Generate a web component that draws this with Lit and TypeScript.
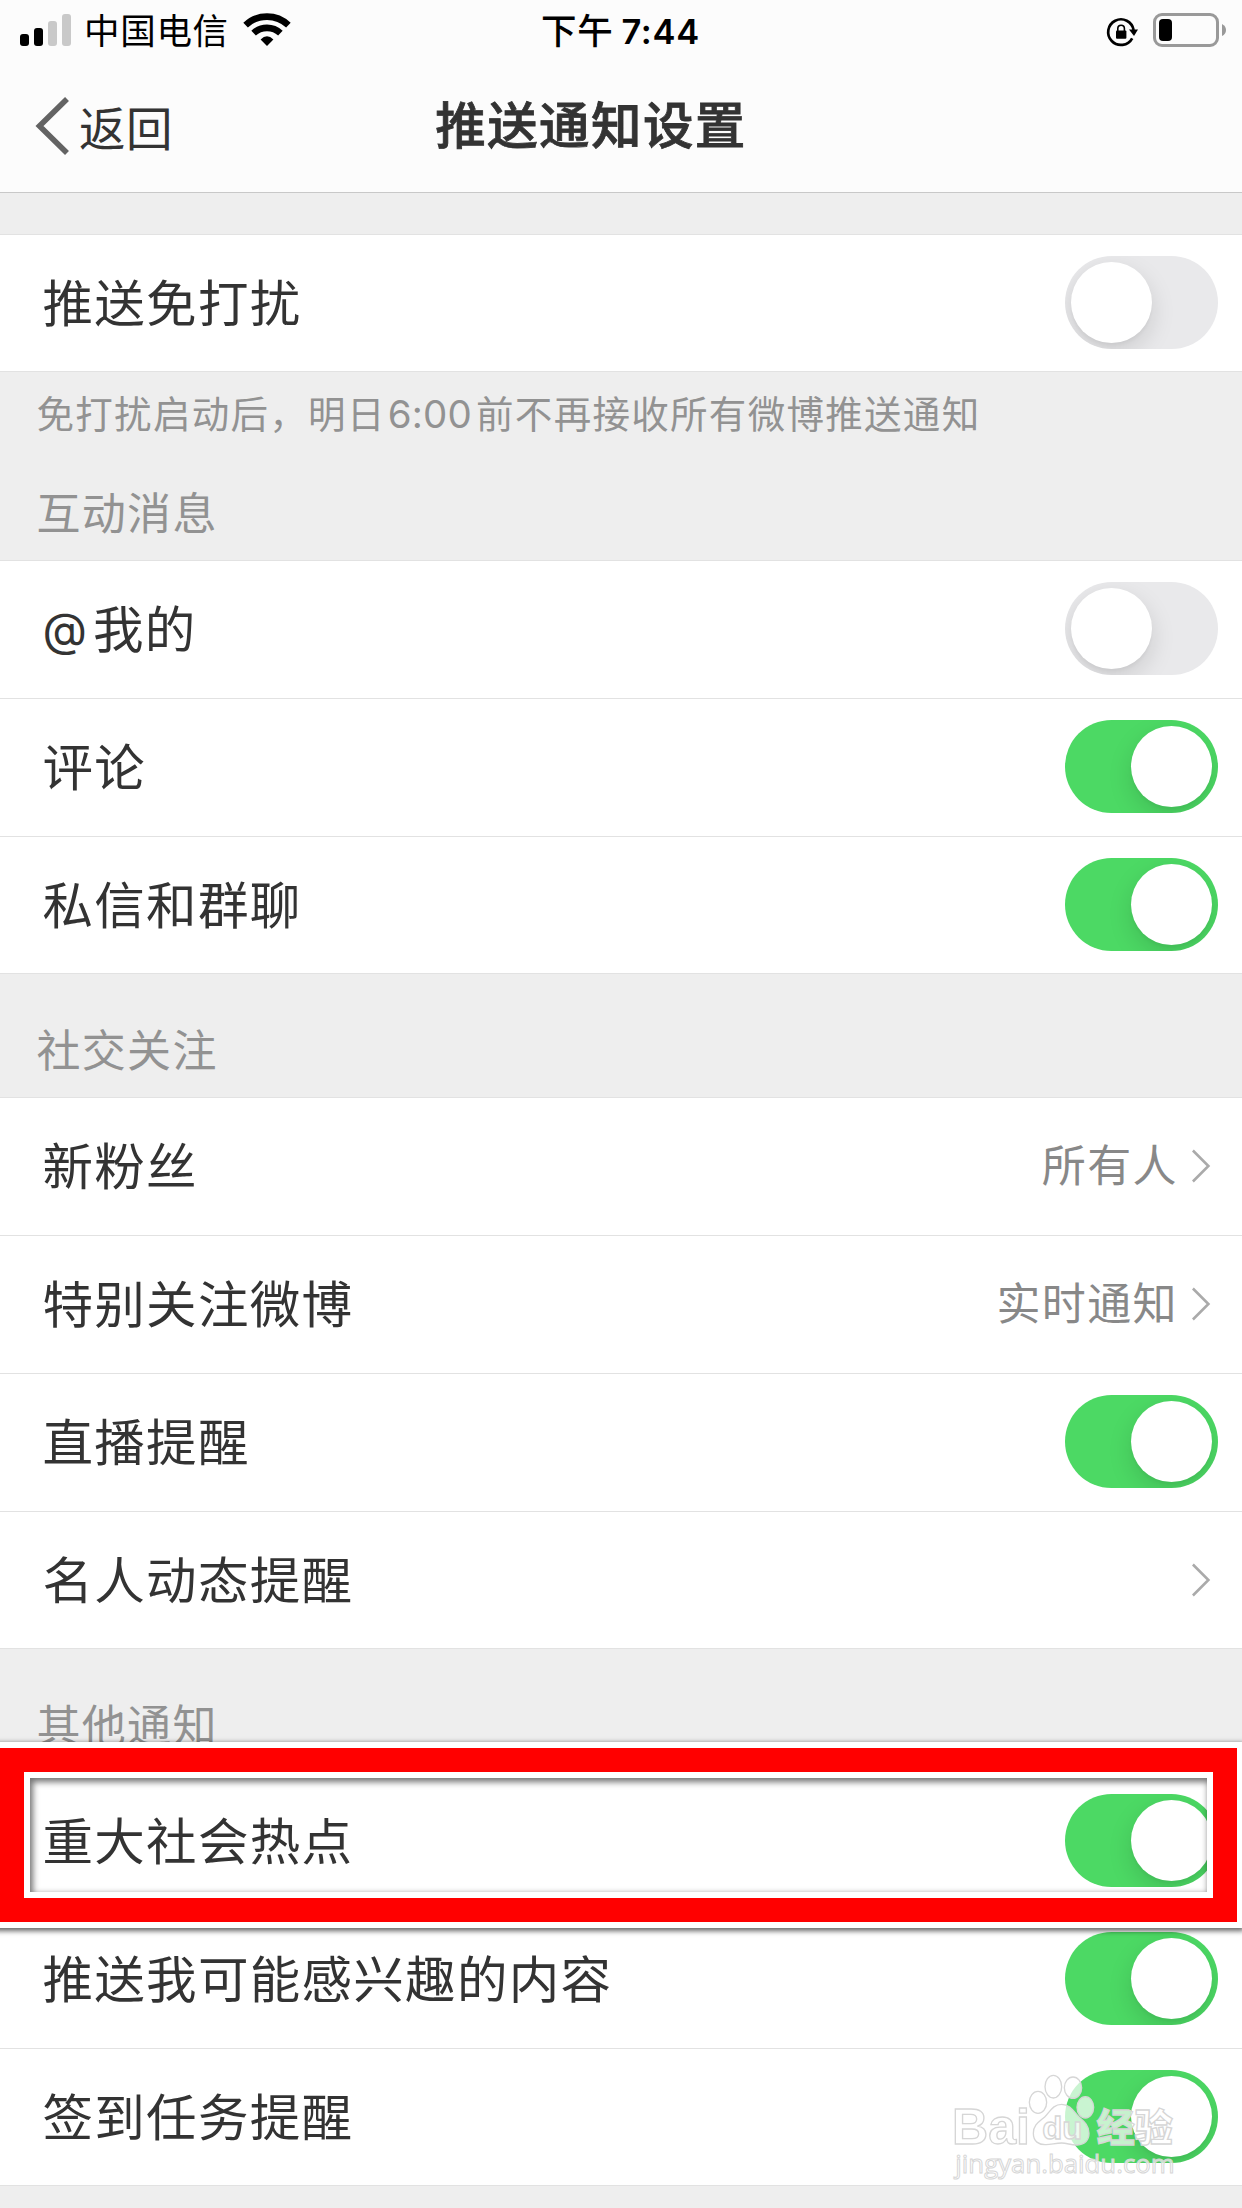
import { LitElement, html, css, svg, nothing } from "lit";
import { customElement, property } from "lit/decorators.js";
import { classMap } from "lit/directives/class-map.js";

interface Item {
  label: string;
  prefix?: string;
  on?: boolean;
  value?: string;
}

const INTERACTION: Item[] = [
  { prefix: "@", label: "我的", on: false },
  { label: "评论", on: true },
  { label: "私信和群聊", on: true },
];

const SOCIAL: Item[] = [
  { label: "新粉丝", value: "所有人" },
  { label: "特别关注微博", value: "实时通知" },
  { label: "直播提醒", on: true },
  { label: "名人动态提醒", value: "" },
];

const OTHER: Item[] = [
  { label: "重大社会热点", on: true },
  { label: "推送我可能感兴趣的内容", on: true },
  { label: "签到任务提醒", on: true },
];

@customElement("toggle-switch")
export class ToggleSwitch extends LitElement {
  @property({ type: Boolean }) on = false;

  static styles = css`
    :host {
      display: block;
      flex: none;
    }
    .track {
      box-sizing: border-box;
      width: 153px;
      height: 93px;
      padding: 6px;
      border-radius: 47px;
      background: #e9e9eb;
      overflow: hidden;
      display: flex;
      justify-content: flex-start;
    }
    .track.on {
      background: #4cd964;
      justify-content: flex-end;
    }
    .knob {
      width: 81px;
      height: 81px;
      border-radius: 50%;
      background: #fff;
      box-shadow: 0 9px 24px rgba(0, 0, 0, 0.13), 0 3px 3px rgba(0, 0, 0, 0.03);
    }
  `;

  render() {
    return html`<div class=${classMap({ track: true, on: this.on })}><div class="knob"></div></div>`;
  }
}

@customElement("setting-group")
export class SettingGroup extends LitElement {
  @property({ attribute: false }) items: Item[] = [];

  static styles = css`
    :host {
      display: block;
      background: #fff;
      border-top: 1px solid #e2e2e2;
    }
    .row {
      box-sizing: border-box;
      height: 138px;
      padding: 21px 24px 0 42.5px;
      border-bottom: 1px solid #e2e2e2;
      display: flex;
      justify-content: space-between;
      align-items: flex-start;
    }
    .row:last-child {
      height: 137px;
    }
    .label {
      font-size: 50.5px;
      letter-spacing: 1.3px;
      line-height: 88px;
      color: #333;
      white-space: nowrap;
    }
    .prefix {
      font-family: Inter, sans-serif;
      font-size: 46px;
      letter-spacing: 6px;
      line-height: 1;
      vertical-align: 2px;
    }
    .more {
      display: flex;
      align-items: center;
      gap: 14px;
      height: 93px;
      padding-right: 6px;
    }
    .value {
      margin-top: -5px;
      font-size: 44px;
      letter-spacing: 1.4px;
      line-height: 88px;
      color: #888;
    }
    .chevron {
      display: block;
      width: 20px;
      height: 34px;
    }
  `;

  private accessory(item: Item) {
    if (item.on !== undefined) {
      return html`<toggle-switch ?on=${item.on}></toggle-switch>`;
    }
    return html`<div class="more">
      ${item.value ? html`<span class="value">${item.value}</span>` : nothing}
      <svg class="chevron" viewBox="0 0 20 34">
        <path d="M0.9 1.5 L16.4 17 L0.9 32.5" fill="none" stroke="#aaa" stroke-width="2.6" />
      </svg>
    </div>`;
  }

  render() {
    return this.items.map(
      (item) =>
        html`<div class="row">
          <span class="label">${item.prefix ? html`<span class="prefix">${item.prefix}</span>` : nothing}${item.label}</span>
          ${this.accessory(item)}
        </div>`
    );
  }
}

@customElement("app-root")
export class AppRoot extends LitElement {
  static styles = css`
    :host {
      display: block;
      position: relative;
      width: 1242px;
      height: 2208px;
      overflow: hidden;
      background: #eeeeee;
      font-family: "Noto Sans CJK SC", sans-serif;
    }
    .top {
      box-sizing: border-box;
      height: 193px;
      background: #fcfcfc;
      border-bottom: 1px solid #c8c8c8;
    }
    .status {
      height: 62px;
      display: grid;
      grid-template-columns: 1fr auto 1fr;
      align-items: start;
      color: #000;
      font-size: 35.5px;
      line-height: 58px;
      letter-spacing: 0.7px;
    }
    .left {
      display: flex;
      align-items: flex-start;
      padding-left: 20px;
    }
    .bars {
      width: 52px;
      height: 62px;
      margin-right: 12px;
    }
    .wifi {
      width: 48px;
      height: 62px;
      margin-left: 14px;
    }
    .clock {
      margin-left: -1px;
      font-weight: 500;
      white-space: nowrap;
    }
    .digits {
      font-family: Inter, "Liberation Sans", sans-serif;
    }
    .clock .digits {
      margin-left: 8px;
      font-weight: 600;
      font-size: 34.5px;
    }
    .right {
      display: flex;
      justify-content: flex-end;
      align-items: flex-start;
    }
    .power {
      width: 142px;
      height: 62px;
    }
    .nav {
      height: 130px;
      display: grid;
      grid-template-columns: 1fr auto 1fr;
    }
    .back {
      display: flex;
      padding-left: 35px;
      color: #333;
      font-size: 46.5px;
      letter-spacing: 0.5px;
      line-height: 127px;
    }
    .arrow {
      width: 44px;
      height: 130px;
    }
    .title {
      margin-right: 60px;
      color: #333;
      font-size: 50.5px;
      font-weight: 500;
      -webkit-text-stroke: 0.8px #333;
      letter-spacing: 1.4px;
      line-height: 120px;
      white-space: nowrap;
    }
    .first {
      margin-top: 41px;
    }
    .note {
      height: 84px;
      padding-left: 36.5px;
      font-size: 37.5px;
      letter-spacing: 1.3px;
      line-height: 80px;
      color: #929292;
      white-space: nowrap;
    }
    .note .digits {
      font-size: 38.5px;
      letter-spacing: 0.2px;
      margin: 0 4px 0 2px;
    }
    .heading {
      box-sizing: border-box;
      height: 123px;
      padding: 31px 0 0 36.5px;
      font-size: 44px;
      letter-spacing: 1.3px;
      line-height: 87px;
      color: #929292;
    }
    .heading.tight {
      height: 104px;
      padding-top: 12px;
    }
    .frame {
      position: absolute;
      left: -0.5px;
      top: 1747.5px;
      width: 1189.5px;
      height: 126px;
      border: 24px solid #f00;
      box-shadow: 0 0 0 6px #fff, 0 2px 5px 7px rgba(0, 0, 0, 0.6), inset 0 0 0 6px #fff,
        inset 2px 3px 6px 7px rgba(0, 0, 0, 0.55);
    }
    .watermark {
      position: absolute;
      left: 900px;
      top: 2040px;
      width: 342px;
      height: 168px;
    }
    .wm-latin {
      font-family: "Liberation Sans", sans-serif;
      font-weight: 700;
    }
    .wm-cjk {
      font-family: "Noto Sans CJK SC", sans-serif;
      font-weight: 900;
    }
    .wm-url {
      font-family: "Open Sans", sans-serif;
    }
  `;

  private paw() {
    return svg`
      <ellipse cx="414" cy="187" rx="26" ry="33" />
      <ellipse cx="460" cy="140" rx="25" ry="34" />
      <ellipse cx="519" cy="143" rx="26" ry="32" />
      <ellipse cx="556" cy="202" rx="25" ry="32" />
      <path d="M485 193 C458 193 450 216 434 231 C418 245 400 254 400 280 C400 304 416 315 438 314 C456 313 468 309 485 309 C502 309 513 316 532 315 C555 314 567 300 567 280 C567 256 552 244 538 232 C522 217 512 193 485 193 Z" />`;
  }

  render() {
    return html`
      <header class="top">
        <div class="status">
          <div class="left">
            <svg class="bars" viewBox="0 0 52 62">
              <rect x="0" y="34" width="9" height="12" rx="3" />
              <rect x="14" y="28" width="9" height="18" rx="3" />
              <rect x="28" y="21" width="9" height="25" rx="3" fill="#c9c9c9" />
              <rect x="42" y="14" width="9" height="32" rx="3" fill="#c9c9c9" />
            </svg>
            <span>中国电信</span>
            <svg class="wifi" viewBox="0 0 48 62">
              <path d="M2.6 25.2 A31 31 0 0 1 45.4 25.2" fill="none" stroke="#000" stroke-width="6.6" />
              <path d="M10.6 33.2 A19.5 19.5 0 0 1 37.4 33.2" fill="none" stroke="#000" stroke-width="6.6" />
              <path d="M17.6 39.4 Q24 33 30.4 39.4 L24 46 Z" />
            </svg>
          </div>
          <div class="clock">下午<span class="digits">7:44</span></div>
          <div class="right">
            <svg class="power" viewBox="1100 0 142 62">
              <path d="M1132.2 38.3 A12.8 12.8 0 1 1 1133.6 30" fill="none" stroke="#000" stroke-width="2.7" />
              <path d="M1129 29.5 H1138 L1134 36 Z" />
              <rect x="1116" y="30.5" width="10.4" height="8.3" rx="1" />
              <path d="M1117.8 31 V28.5 A3.3 3.3 0 0 1 1124.4 28.5 V31" fill="none" stroke="#000" stroke-width="1.6" />
              <rect x="1154.5" y="14.5" width="63" height="31" rx="7.5" fill="none" stroke="#999" stroke-width="3" />
              <rect x="1159" y="19" width="13" height="22" rx="4" />
              <path d="M1222 24 Q1226 26 1226 30 Q1226 34 1222 36 Z" fill="#999" />
            </svg>
          </div>
        </div>
        <div class="nav">
          <div class="back">
            <svg class="arrow" viewBox="35 62 44 130">
              <path d="M67 99 L39.5 126 L67 153" fill="none" stroke="#636363" stroke-width="5.6" />
            </svg>
            <span>返回</span>
          </div>
          <div class="title">推送通知设置</div>
        </div>
      </header>

      <setting-group class="first" .items=${[{ label: "推送免打扰", on: false }]}></setting-group>
      <div class="note">免打扰启动后，明日<span class="digits">6:00</span>前不再接收所有微博推送通知</div>
      <div class="heading tight">互动消息</div>
      <setting-group .items=${INTERACTION}></setting-group>
      <div class="heading">社交关注</div>
      <setting-group .items=${SOCIAL}></setting-group>
      <div class="heading">其他通知</div>
      <setting-group .items=${OTHER}></setting-group>

      <div class="frame"></div>

      <svg class="watermark" viewBox="0 0 1026 504" fill="#fff" fill-opacity=".7" stroke="#d6d6d6" stroke-width="4">
        ${this.paw()}
        <text class="wm-latin" x="156" y="312" font-size="150" textLength="234" lengthAdjust="spacingAndGlyphs">Bai</text>
        <text class="wm-latin" x="427" y="297" font-size="96" textLength="120" lengthAdjust="spacingAndGlyphs">du</text>
        <text class="wm-cjk" x="590" y="303" font-size="114" textLength="228" lengthAdjust="spacingAndGlyphs">经验</text>
        <text class="wm-url" x="166" y="400" font-size="78" stroke-width="3" textLength="658" lengthAdjust="spacingAndGlyphs">jingyan.baidu.com</text>
      </svg>
    `;
  }
}
